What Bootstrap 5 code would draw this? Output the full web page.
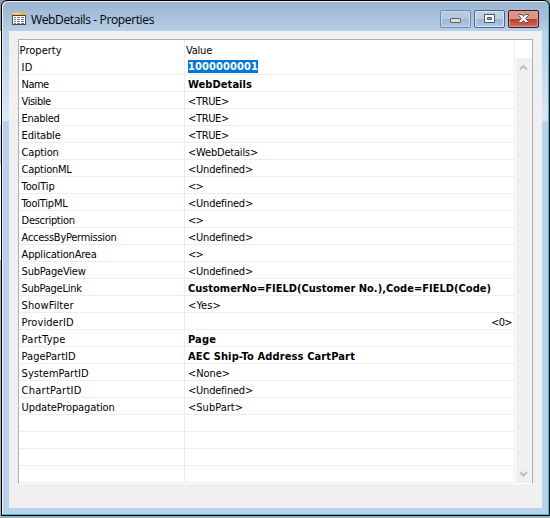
<!DOCTYPE html>
<html lang="en">
<head>
<meta charset="utf-8">
<meta name="viewport" content="width=device-width, initial-scale=1">
<title>WebDetails - Properties</title>
<link href="https://cdn.jsdelivr.net/npm/bootstrap@5.3.0/dist/css/bootstrap.min.css" rel="stylesheet">
<style>
html,body{height:518px;overflow:hidden}
body{background:linear-gradient(#999 0 31px,#fff 31px 125px,#c9d9e8 125px 165px,#fff 165px 260px,#a9a9a9 260px);font-family:"DejaVu Sans Condensed","DejaVu Sans",sans-serif;font-stretch:condensed;font-size:11px;line-height:16px;color:#000}
.window{width:549px;height:516px;margin-left:1px;border:1px solid #000;border-radius:6px 6px 0 0;background:linear-gradient(#9ab4d2 0,#a5bfdc 15px,#b9d1ea 31px,#c2d6ec 60px,#dce8f5 119px,#b9d1ea 121px);box-shadow:inset -1px -1px #19cbe8,inset 1px 1px #e6effa;padding:0 7px 7px}
.titlebar{height:30px;padding:0 1px 0 2px}
.title-icon{margin-top:8px}
.caption-text{font:12px/16px "Open Sans","Noto Sans",sans-serif;white-space:pre;margin-left:4px;padding-top:11px}
.win-buttons{gap:3px;margin:9px 2px 0 auto}
.win-btn{width:31px;height:18px;border:1px solid #7189a5;border-radius:2px;box-shadow:inset 0 0 0 1px #c8d9ec;background:linear-gradient(#b5cbe2 48%,#9eb9d6 50%,#aec8e2)}
.win-btn.max{border-color:#4e6580;box-shadow:inset 0 0 0 1px #d9e7f5;background:linear-gradient(#bdd0e5 48%,#98b5d4 50%,#b1cbe6)}
.win-btn.close-win{border-color:#431422;box-shadow:inset 0 0 0 1px #df9c92;background:linear-gradient(#dc9489 48%,#b83a25 50%,#cf7160)}
.client{background:#f0f0f0;height:477px;padding:8px 9px 0}
.sheet{height:445px;border:1px solid #acb0b6;border-bottom-color:#fff;background:#fff}
.prop-grid{width:496px}
.prop-row{height:17px;border-bottom:1px solid #ededed}
.prop-row.head{height:18px;border-bottom:0}
.name-cell{width:166px;border-right:1px solid #ededed;padding-left:3px;white-space:nowrap}
.value-cell{padding-left:3px;white-space:nowrap;border-right:1px solid #ededed}
.name-cell,.value-cell{line-height:20px;height:16px}
.head .name-cell,.head .value-cell{padding-left:1px;line-height:22px;height:18px}
.value-cell.numeric{padding-right:2px}
.prop-row span{display:inline-block}
.name-cell span{margin-left:-.4px}
.set{font-weight:700}
.picked{background:#0078d7;color:#fff;height:13px;line-height:14px;vertical-align:top;margin-top:2px}
.scroll-track{width:17px;margin-top:18px;background:#f0f0f0;padding:4px 1px 4px 0;border-left:1px solid #fff}
</style>
<script src="https://cdn.jsdelivr.net/npm/bootstrap@5.3.0/dist/js/bootstrap.bundle.min.js"></script>
</head>
<body>
<main class="window">
<header class="titlebar d-flex align-items-start">
<svg class="title-icon" width="16" height="20" viewBox="0 0 16 20" shape-rendering="crispEdges"><path d="M1 4h14v12H1z" fill="#484848"/><path d="M2 7h12v8H2z" fill="#fff"/><path d="M1 4h14v2H1z" fill="#efb52d"/><path d="M2 4h7v1H2z" fill="#ffe58c"/><path d="M3 8h2v1H3zM6 8h3v1H6zM10 8h3v1h-3zM3 10h2v1H3zM6 10h3v1H6zM10 10h3v1h-3zM3 12h2v1H3zM6 12h3v1H6zM10 12h3v1h-3zM3 14h2v1H3zM6 14h3v1H6zM10 14h3v1h-3z" fill="#777"/></svg>
<div class="caption-text"><span data-w="123">WebDetails - Properties</span></div>
<div class="win-buttons d-flex">
<div class="win-btn"><svg class="d-block" width="29" height="16"><rect x="9.5" y="7.5" width="10" height="4" rx=".5" fill="#ddd" stroke="#67625f"/></svg></div>
<div class="win-btn max"><svg class="d-block" width="29" height="16"><path d="M9.500 3.500h10v8h-10z" fill="#fff" stroke="#525666"/><path d="M12.500 6.500h4v2h-4z" fill="#8eabcc" stroke="#525666"/></svg></div>
<div class="win-btn close-win"><svg class="d-block" width="29" height="16"><path d="M9.500 3.500h3.500l1.500 2 1.500-2h3.500v1L16.500 7.500l3 3v1H16l-1.500-2-1.500 2H9.500v-1l3-3-3-3z" fill="#fff" stroke="#55505e"/></svg></div>
</div>
</header>
<section class="client">
<div class="sheet d-flex">
<div class="prop-grid" id="grid"></div>
<div class="scroll-track d-flex flex-column justify-content-between align-items-center">
<svg width="9" height="10"><path d="M1 7.500L4.500 4 8 7.500" fill="none" stroke="#bfbfbf" stroke-width="2"/></svg>
<svg width="9" height="10"><path d="M1 3L4.500 6.500 8 3" fill="none" stroke="#bfbfbf" stroke-width="2"/></svg>
</div>
</div>
</section>
</main>
<script>
// Each row: property, its width, value, its width, style
const rows=[
["Property",42,"Value",26,"head"],
["ID",11,"1000000001",70,"set picked"],
["Name",27,"WebDetails",64,"set"],
["Visible",29,"<TRUE>",41],["Enabled",38,"<TRUE>",41],["Editable",39,"<TRUE>",41],
["Caption",37,"<WebDetails>",70],["CaptionML",50,"<Undefined>",65],
["ToolTip",33,"<>",15],["ToolTipML",46,"<Undefined>",65],["Description",53,"<>",15],
["AccessByPermission",95,"<Undefined>",65],["ApplicationArea",75,"<>",15],
["SubPageView",64,"<Undefined>",65],
["SubPageLink",60,"CustomerNo=FIELD(Customer No.),Code=FIELD(Code)",303,"set"],
["ShowFilter",52,"<Yes>",33],["ProviderID",52,"<0>",21,"end"],
["PartType",44,"Page",28,"set"],["PagePartID",54,"AEC Ship-To Address CartPart",167,"set"],
["SystemPartID",67,"<None>",42],["ChartPartID",60,"<Undefined>",65],
["UpdatePropagation",93,"<SubPart>",55],
["",0,"",0],["",0,"",0],["",0,"",0],["",0,"",0]];
const grid=document.getElementById("grid");
for(const [name,nw,value,vw,kind=""] of rows){
  const row=document.createElement("div");
  row.className="prop-row d-flex"+(kind==="head"?" head":"");
  const cells=[["name-cell flex-shrink-0",name,nw,""],["value-cell flex-grow-1"+(kind==="end"?" text-end numeric":""),value,vw,kind.includes("set")?kind:""]];
  for(const [cls,text,w,style] of cells){
    const cell=document.createElement("div"),span=document.createElement("span");
    cell.className=cls;span.className=style;span.textContent=text;span.dataset.w=w;
    cell.append(span);row.append(cell);
  }
  grid.append(row);
}
for(const s of document.querySelectorAll("span[data-w]")){
  const n=s.textContent.length;
  if(n){s.style.letterSpacing=(s.dataset.w-s.getBoundingClientRect().width)/n+"px";}
}
</script>
</body>
</html>
